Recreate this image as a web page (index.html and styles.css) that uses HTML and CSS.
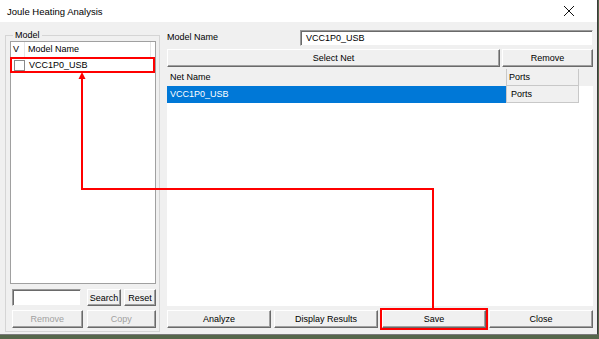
FILE: index.html
```html
<!DOCTYPE html>
<html lang="en">
<head>
    <meta charset="UTF-8">
    <title>Joule Heating Analysis</title>
    <link rel="stylesheet" href="styles.css">
</head>
<body>
    <div class="window">
        <div class="titlebar">
            <span class="title">Joule Heating Analysis</span>
            <svg class="close" width="12" height="12" viewBox="0 0 12 12">
                <path d="M1 1 L11 11 M11 1 L1 11" stroke="#111" stroke-width="1" fill="none"/>
            </svg>
        </div>

        <div class="client">
            <fieldset class="group">
                <legend>Model</legend>
                <div class="listbox">
                    <div class="list-head">
                        <span class="col-v">V</span>
                        <span class="col-name">Model Name</span>
                    </div>
                    <div class="list-row highlight">
                        <span class="check"></span>
                        <span>VCC1P0_USB</span>
                    </div>
                </div>
                <div class="search-row">
                    <div class="textbox small"></div>
                    <button class="btn search">Search</button>
                    <button class="btn reset">Reset</button>
                </div>
                <div class="action-row">
                    <button class="btn disabled">Remove</button>
                    <button class="btn disabled">Copy</button>
                </div>
            </fieldset>

            <div class="main">
                <div class="name-row">
                    <span class="label">Model Name</span>
                    <div class="textbox wide">VCC1P0_USB</div>
                </div>
                <div class="net-buttons">
                    <button class="btn select">Select Net</button>
                    <button class="btn remove">Remove</button>
                </div>
                <div class="grid">
                    <div class="grid-head">
                        <span class="cell-name">Net Name</span>
                        <span class="cell-ports">Ports</span>
                    </div>
                    <div class="grid-row">
                        <span class="cell-name selected">VCC1P0_USB</span>
                        <span class="cell-ports">Ports</span>
                    </div>
                </div>
                <div class="bottom-buttons">
                    <button class="btn">Analyze</button>
                    <button class="btn">Display Results</button>
                    <button class="btn highlight-save">Save</button>
                    <button class="btn">Close</button>
                </div>
            </div>
        </div>

        <!-- annotation arrow from Save to the model row -->
        <svg class="annotation" width="598" height="335" viewBox="0 0 598 335">
            <path d="M433 308 V189 H82 V78" stroke="#f00" stroke-width="2" fill="none"/>
            <polygon points="82,72 78.5,79 85.5,79" fill="#f00"/>
        </svg>
    </div>
</body>
</html>
```

FILE: styles.css
```css
body {
    margin: 0;
    background: #55664a;
    font-family: 'Liberation Sans', Arial, sans-serif;
    font-size: 9px;
    color: #000;
}
.window {
    position: relative;
    width: 597px;
    height: 334px;
    background: #f0f0f0;
    border-right: 1px solid #3a3a3a;
    border-bottom: 1px solid #7a7a7a;
}
.titlebar {
    height: 22px;
    background: #fff;
    display: flex;
    align-items: center;
    justify-content: space-between;
    padding: 0 22px 0 7px;
    font-size: 9.5px;
}
.client {
    display: flex;
    gap: 7px;
    padding: 8px 0 0 5px;
}
.group {
    box-sizing: border-box;
    flex: none;
    min-width: 0;
    margin: 0;
    width: 155px;
    height: 302px;
    padding: 0 3px 3px 4px;
    border: 1px solid #d5d5d5;
    display: flex;
    flex-direction: column;
}
.group legend {
    padding: 0 2px;
    margin-left: 3px;
    height: 11px;
    line-height: 11px;
}
.listbox {
    height: 241px;
    background: #fff;
    border: 1px solid #a0a0a0;
}
.list-head {
    display: flex;
    height: 15px;
    line-height: 15px;
    border-bottom: 1px solid #e5e5e5;
}
.col-v {
    width: 11px;
    padding-left: 2px;
    border-right: 1px solid #e5e5e5;
}
.col-name {
    width: 122px;
    padding-left: 3px;
    border-right: 1px solid #e5e5e5;
}
.list-row {
    display: flex;
    align-items: center;
    gap: 4px;
    height: 12px;
    margin: 1px 2px 0 1px;
    padding-left: 2px;
}
.highlight {
    outline: 2px solid #f00;
}
.check {
    width: 9px;
    height: 9px;
    border: 1px solid #8a8a8a;
    background: #fff;
}
.search-row {
    display: flex;
    gap: 3px;
    margin-top: 5px;
    height: 17px;
}
.action-row {
    display: flex;
    gap: 4px;
    margin-top: 4px;
    height: 18px;
}
.btn {
    box-sizing: border-box;
    font-family: inherit;
    font-size: 9px;
    color: #000;
    background: #f0f0f0;
    border: 1px solid;
    border-color: #fff #6a6a6a #6a6a6a #fff;
    box-shadow: inset -1px -1px #a0a0a0;
    padding: 0;
    margin: 0;
    height: 18px;
}
.btn.disabled {
    color: #a0a0a0;
    width: 71px;
}
.action-row .btn:first-child {
    margin-left: 2px;
}
.action-row .btn:last-child {
    width: 70px;
}
.search {
    width: 34px;
    height: 17px;
    margin-left: 3px;
}
.reset {
    width: 32px;
    height: 17px;
}
.textbox {
    background: #fff;
    border: 1px solid;
    border-color: #9a9a9a #f0f0f0 #f0f0f0 #9a9a9a;
    box-shadow: inset 1px 1px #6a6a6a;
    box-sizing: border-box;
}
.textbox.small {
    width: 69px;
    height: 17px;
    margin-left: 2px;
}
.main {
    flex: none;
    width: 426px;
    display: flex;
    flex-direction: column;
}
.name-row {
    display: flex;
    justify-content: space-between;
    align-items: center;
    height: 16px;
}
.label {
    margin-top: -3px;
}
.textbox.wide {
    width: 293px;
    height: 16px;
    line-height: 14px;
    padding-left: 5px;
}
.net-buttons {
    display: flex;
    gap: 2px;
    margin-top: 3px;
}
.select {
    width: 333px;
}
.remove {
    flex: 1;
}
.grid {
    margin-top: 2px;
    height: 237px;
    background: #fff;
}
.grid-head, .grid-row {
    display: flex;
    height: 17px;
    line-height: 16px;
}
.grid-head {
    background: #f0f0f0;
}
.cell-name {
    box-sizing: border-box;
    width: 339px;
    padding-left: 3px;
}
.cell-ports {
    box-sizing: border-box;
    width: 73px;
    padding-left: 2px;
    border: 1px solid #c8c8c8;
    border-width: 0 1px 1px 1px;
    background: #f0f0f0;
}
.grid-row .cell-ports {
    padding-left: 4px;
}
.selected {
    background: #0078d7;
    color: #fff;
}
.bottom-buttons {
    display: flex;
    gap: 3px;
    margin-top: 4px;
}
.bottom-buttons .btn {
    flex: 1;
}
.highlight-save {
    outline: 2px solid #f00;
    outline-offset: 0;
    margin-left: 1px;
}
.annotation {
    position: absolute;
    left: 0;
    top: 0;
    pointer-events: none;
}
```
